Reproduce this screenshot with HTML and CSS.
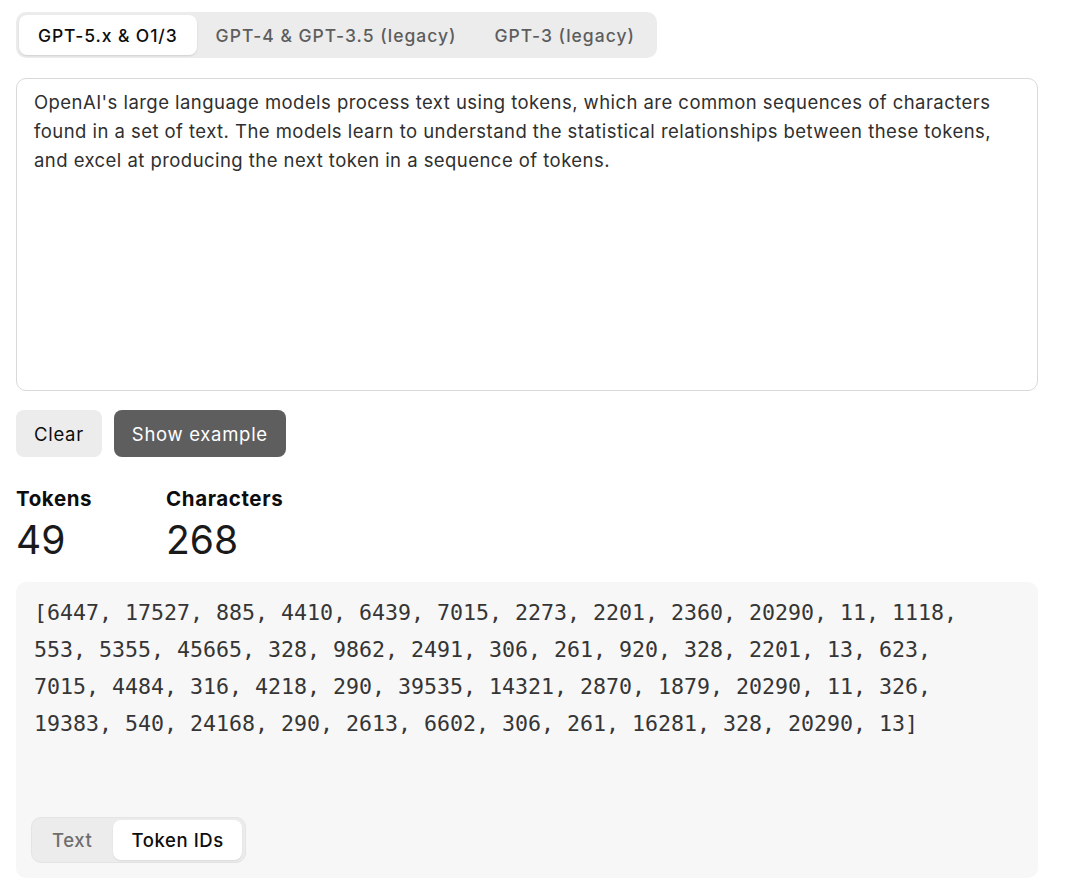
FILE: index.html
```html
<!DOCTYPE html>
<html lang="en">
<head>
<meta charset="utf-8">
<title>Tokenizer</title>
<link rel="stylesheet" href="styles.css">
</head>
<body>
<main class="page">
  <div class="tabs">
    <button class="tab active">GPT-5.x &amp; O1/3</button>
    <button class="tab">GPT-4 &amp; GPT-3.5 (legacy)</button>
    <button class="tab">GPT-3 (legacy)</button>
  </div>

  <div class="input">OpenAI's large language models process text using tokens, which are common sequences of characters found in a set of text. The models learn to understand the statistical relationships between these tokens, and excel at producing the next token in a sequence of tokens.</div>

  <div class="actions">
    <button class="btn btn-light">Clear</button>
    <button class="btn btn-dark">Show example</button>
  </div>

  <div class="stats">
    <div class="stat">
      <div class="stat-label">Tokens</div>
      <div class="stat-value">49</div>
    </div>
    <div class="stat">
      <div class="stat-label">Characters</div>
      <div class="stat-value">268</div>
    </div>
  </div>

  <div class="output">
    <div class="ids">[6447, 17527, 885, 4410, 6439, 7015, 2273, 2201, 2360, 20290, 11, 1118, 553, 5355, 45665, 328, 9862, 2491, 306, 261, 920, 328, 2201, 13, 623, 7015, 4484, 316, 4218, 290, 39535, 14321, 2870, 1879, 20290, 11, 326, 19383, 540, 24168, 290, 2613, 6602, 306, 261, 16281, 328, 20290, 13]</div>
    <div class="toggle">
      <button class="toggle-item">Text</button>
      <button class="toggle-item active">Token IDs</button>
    </div>
  </div>
</main>
</body>
</html>
```
FILE: styles.css
```css
* { box-sizing: border-box; }
html, body { margin: 0; padding: 0; background: #fff; }
body {
  font-family: Inter, "Noto Sans", "Liberation Sans", sans-serif;
  color: #0d0d0d;
}
button { font-family: inherit; border: 0; cursor: pointer; }

.page {
  width: 1022px;
  margin: 0 0 0 16px;
  padding-top: 12px;
}

.tabs {
  display: inline-flex;
  align-items: center;
  background: #ececec;
  border-radius: 10px;
  padding: 3px;
  height: 46px;
}
.tab {
  height: 40px;
  padding: 0 19px;
  background: transparent;
  border-radius: 8px;
  font-size: 17.5px;
  font-weight: 500;
  color: #5d5d5d;
  letter-spacing: 1px;
}
.tab.active {
  background: #fff;
  color: #0d0d0d;
  letter-spacing: 0.9px;
  box-shadow: 0 1px 2px rgba(0,0,0,0.12);
}

.input {
  margin-top: 20px;
  height: 313px;
  border: 1px solid #d9d9d9;
  border-radius: 10px;
  padding: 9px 17px;
  font-size: 18.5px;
  line-height: 29px;
  color: #2f2f2f;
  letter-spacing: 0.45px;
}

.actions {
  display: flex;
  gap: 12px;
  margin-top: 19px;
}
.btn {
  height: 47px;
  padding: 0 18px;
  border-radius: 8px;
  font-size: 18.5px;
  letter-spacing: 0.7px;
}
.btn-light { background: #ececec; color: #0d0d0d; }
.btn-dark { background: #5e5e5e; color: #fff; }

.stats {
  display: flex;
  margin-top: 30px;
}
.stat { width: 150px; }
.stat-label {
  font-size: 20.5px;
  font-weight: 700;
  line-height: 24px;
  letter-spacing: 0.6px;
}
.stat-value {
  font-size: 39px;
  line-height: 44px;
  margin-top: 7px;
  font-weight: 400;
  color: #1a1a1a;
  letter-spacing: 0;
}

.output {
  margin-top: 20px;
  background: #f7f7f7;
  border-radius: 10px;
  padding: 12px 16px 15px 15px;
  height: 296px;
  display: flex;
  flex-direction: column;
  align-items: flex-start;
}
.ids {
  font-family: "DejaVu Sans Mono", monospace;
  font-size: 21.6px;
  line-height: 37px;
  color: #353535;
  padding-left: 3px;
  width: 955px;
  white-space: pre-wrap;
}
.toggle {
  margin-top: auto;
  display: inline-flex;
  gap: 4px;
  background: #ececec;
  border: 1px solid #e4e4e4;
  border-radius: 10px;
  padding: 2px 3px;
  height: 46px;
}
.toggle-item {
  height: 40px;
  padding: 0 17px;
  background: transparent;
  border-radius: 8px;
  font-size: 18.5px;
  font-weight: 500;
  color: #6e6e6e;
  letter-spacing: 0.6px;
}
.toggle-item.active {
  padding: 0 18px;
  background: #fff;
  color: #0d0d0d;
  box-shadow: 0 1px 2px rgba(0,0,0,0.08);
}
```
